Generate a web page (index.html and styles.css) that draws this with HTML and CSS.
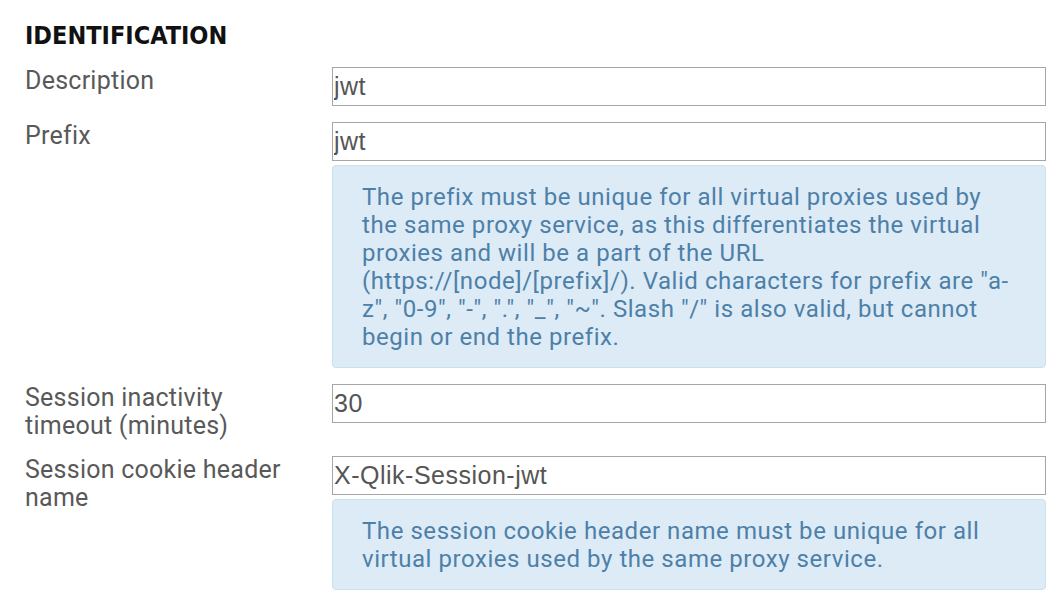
FILE: index.html
```html
<!DOCTYPE html>
<html lang="en">
<head>
<meta charset="utf-8">
<title>Identification</title>
<link rel="stylesheet" href="styles.css">
</head>
<body>
<section class="panel">
  <h2 class="panel-title">IDENTIFICATION</h2>
  <div class="form">
    <label class="field-label" for="desc">Description</label>
    <div class="field-control">
      <input class="text-input" id="desc" type="text" value="jwt">
    </div>

    <label class="field-label" for="prefix">Prefix</label>
    <div class="field-control">
      <input class="text-input" id="prefix" type="text" value="jwt">
      <div class="help">The prefix must be unique for all virtual proxies used by the same proxy service, as this differentiates the virtual proxies and will be a part of the URL (https://[node]/[prefix]/). Valid characters for prefix are "a-z", "0-9", "-", ".", "_", "~". Slash "/" is also valid, but cannot begin or end the prefix.</div>
    </div>

    <label class="field-label" for="timeout">Session inactivity timeout (minutes)</label>
    <div class="field-control">
      <input class="text-input" id="timeout" type="text" value="30">
    </div>

    <label class="field-label" for="cookie">Session cookie header name</label>
    <div class="field-control">
      <input class="text-input" id="cookie" type="text" value="X-Qlik-Session-jwt">
      <div class="help">The session cookie header name must be unique for all virtual proxies used by the same proxy service.</div>
    </div>
  </div>
</section>
</body>
</html>
```

FILE: styles.css
```css
html, body {
  margin: 0;
  padding: 0;
  background: #ffffff;
}

.panel {
  padding: 22px 14px 0 25px;
}

.panel-title {
  margin: 0 0 17px 0;
  font-family: "DejaVu Sans Condensed", "DejaVu Sans", sans-serif;
  font-weight: bold;
  font-size: 25px;
  line-height: 28px;
  color: #111111;
}

.form {
  display: grid;
  grid-template-columns: 307px 714px;
  row-gap: 16px;
}

.field-label {
  font-family: Roboto, "Noto Sans", sans-serif;
  font-size: 25px;
  line-height: 28px;
  letter-spacing: 0.25px;
  color: #595959;
  padding-right: 40px;
}

.field-control {
  display: flex;
  flex-direction: column;
  gap: 4px;
}

.text-input {
  box-sizing: border-box;
  width: 100%;
  height: 39px;
  margin: 0;
  padding: 0 2px 0 1px;
  border: 1px solid #a6a6a6;
  border-radius: 0;
  background: #ffffff;
  font-family: "Liberation Sans", Arial, sans-serif;
  font-size: 25px;
  letter-spacing: 0.5px;
  color: #555555;
  outline: none;
}

.help {
  box-sizing: border-box;
  padding: 17px 30px 16px 29px;
  border: 1px solid #c6e3ee;
  border-radius: 4px;
  background: #ddebf6;
  font-family: Roboto, "Noto Sans", sans-serif;
  font-size: 24px;
  line-height: 28px;
  letter-spacing: 0.55px;
  color: #4d80a8;
}
```
